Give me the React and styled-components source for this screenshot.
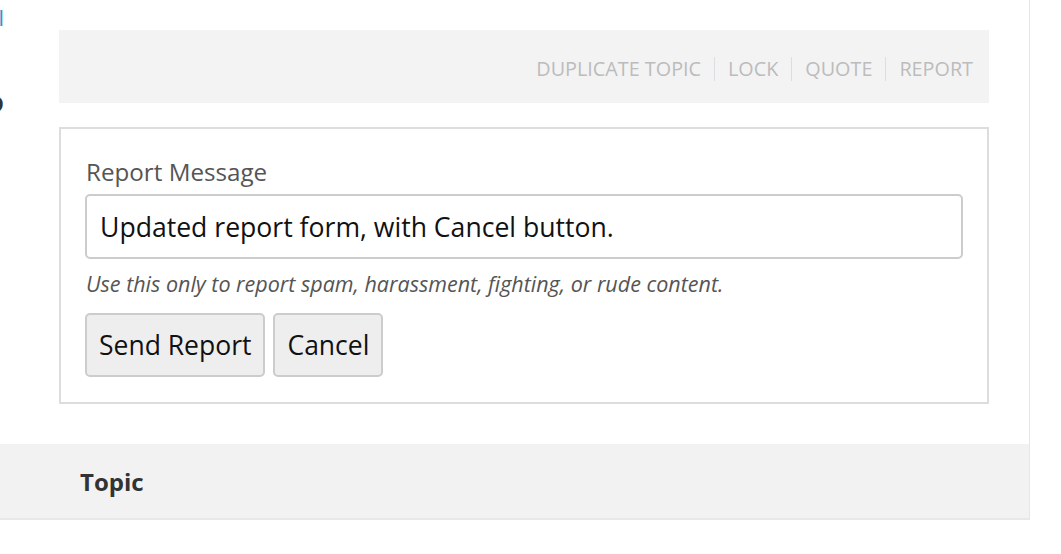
import React from 'react'
import styled, { createGlobalStyle } from 'styled-components'

const Global = createGlobalStyle`
  html, body {
    margin: 0;
    padding: 0;
    background: #fff;
    font-family: "Open Sans", "Noto Sans", sans-serif;
  }
  * { box-sizing: border-box; }
`

const Panel = styled.div`
  width: 1030px;
  border-right: 1px solid #e6e6e6;
`

const Top = styled.div`
  display: flex;
`

const Side = styled.div`
  width: 4px;
  overflow: hidden;
  display: flex;
  flex-direction: column;
  align-items: flex-end;
`

const SideLink = styled.span`
  white-space: nowrap;
  font-size: ${p => p.size}px;
  line-height: 1;
  margin-top: ${p => p.top}px;
  color: ${p => p.color};
  font-weight: ${p => (p.bold ? 700 : 400)};
`

const Content = styled.div`
  flex: 1;
  padding: 30px 40px 40px 55px;
`

const Toolbar = styled.div`
  height: 73px;
  background: #f3f3f3;
  display: flex;
  justify-content: flex-end;
  align-items: center;
  padding: 4px 16px 0 0;
`

const ToolLink = styled.a`
  font-size: 19.8px;
  color: #bcbcbc;
  text-transform: uppercase;
  text-decoration: none;
  line-height: 1;
`

const Sep = styled.span`
  width: 1px;
  height: 24px;
  background: #dcdfe2;
  margin: 0 13px;
`

const FormBox = styled.form`
  margin-top: 24px;
  border: 2px solid #dddddd;
  padding: 31px 24px 25px 24px;
`

const Label = styled.label`
  display: block;
  font-size: 24.2px;
  color: #555;
  line-height: 1;
  margin-bottom: 10px;
  padding-left: 1px;
`

const Input = styled.input`
  display: block;
  width: 100%;
  height: 65px;
  border: 2px solid #cccccc;
  border-radius: 5px;
  padding: 0 13px;
  font-family: "Open Sans", "Noto Sans", sans-serif;
  font-size: 26.6px;
  color: #111;
  outline: none;
`

const Help = styled.p`
  margin: 12px 0 16px 1px;
  font-size: 21.5px;
  font-style: italic;
  color: #555;
  line-height: 1.2;
`

const Buttons = styled.div`
  display: flex;
  gap: 8px;
`

const Button = styled.button`
  height: 64px;
  padding: 0 12px;
  background: #eeeeee;
  border: 2px solid #cccccc;
  border-radius: 5px;
  font-family: "Open Sans", "Noto Sans", sans-serif;
  font-size: 26.5px;
  color: #111;
`

const Band = styled.div`
  height: 76px;
  background: #f2f2f2;
  border-bottom: 2px solid #e8e8e8;
  display: flex;
  align-items: center;
  padding-left: 80px;
  font-size: 24px;
  font-weight: 700;
  color: #333;
`

const links = ['Duplicate Topic', 'Lock', 'Quote', 'Report']

export default function App() {
  return (
    <>
      <Global />
      <Panel>
        <Top>
          <Side>
            <SideLink size={22} top={6} color="#3a8fd0">General</SideLink>
            <SideLink size={29} top={58} color="#333" bold>Info</SideLink>
          </Side>
          <Content>
            <Toolbar>
              {links.map((l, i) => (
                <React.Fragment key={l}>
                  {i > 0 && <Sep />}
                  <ToolLink href="#">{l}</ToolLink>
                </React.Fragment>
              ))}
            </Toolbar>
            <FormBox onSubmit={e => e.preventDefault()}>
              <Label htmlFor="report_message">Report Message</Label>
              <Input
                id="report_message"
                type="text"
                defaultValue="Updated report form, with Cancel button."
              />
              <Help>Use this only to report spam, harassment, fighting, or rude content.</Help>
              <Buttons>
                <Button type="submit">Send Report</Button>
                <Button type="button">Cancel</Button>
              </Buttons>
            </FormBox>
          </Content>
        </Top>
        <Band>Topic</Band>
      </Panel>
    </>
  )
}
